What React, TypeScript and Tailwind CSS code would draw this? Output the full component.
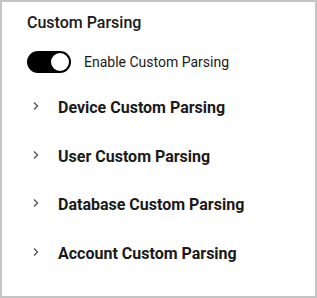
import React from "react";

const items = [
  "Device Custom Parsing",
  "User Custom Parsing",
  "Database Custom Parsing",
  "Account Custom Parsing",
];

export default function App() {
  return (
    <div className="w-[317px] h-[298px] bg-white border-2 border-[#c4c4c4] text-[#1a1a1a]" style={{ fontFamily: "Roboto, sans-serif" }}>
      <div className="pl-[25px] pt-[10px]">
        <div className="text-[16px] font-medium leading-[22px]">Custom Parsing</div>
        <div className="flex items-center mt-[16px] h-[24px]">
          <div className="w-[44px] h-[22px] rounded-full bg-black flex items-center justify-end pr-[2px]">
            <div className="w-[18px] h-[18px] rounded-full bg-white" />
          </div>
          <span className="ml-[13px] text-[14px] leading-[20px]">Enable Custom Parsing</span>
        </div>
        <div className="mt-[10px] flex flex-col">
          {items.map((t) => (
            <div key={t} className="flex items-center h-[48.5px]">
              <svg width="24" height="24" viewBox="0 0 24 24" className="ml-[-3px] mt-[-4px] text-[#555]">
                <path d="M10 8.5l3.5 3.5-3.5 3.5" fill="none" stroke="currentColor" strokeWidth="1.4" />
              </svg>
              <span className="ml-[10px] text-[16px] font-bold">{t}</span>
            </div>
          ))}
        </div>
      </div>
    </div>
  );
}
